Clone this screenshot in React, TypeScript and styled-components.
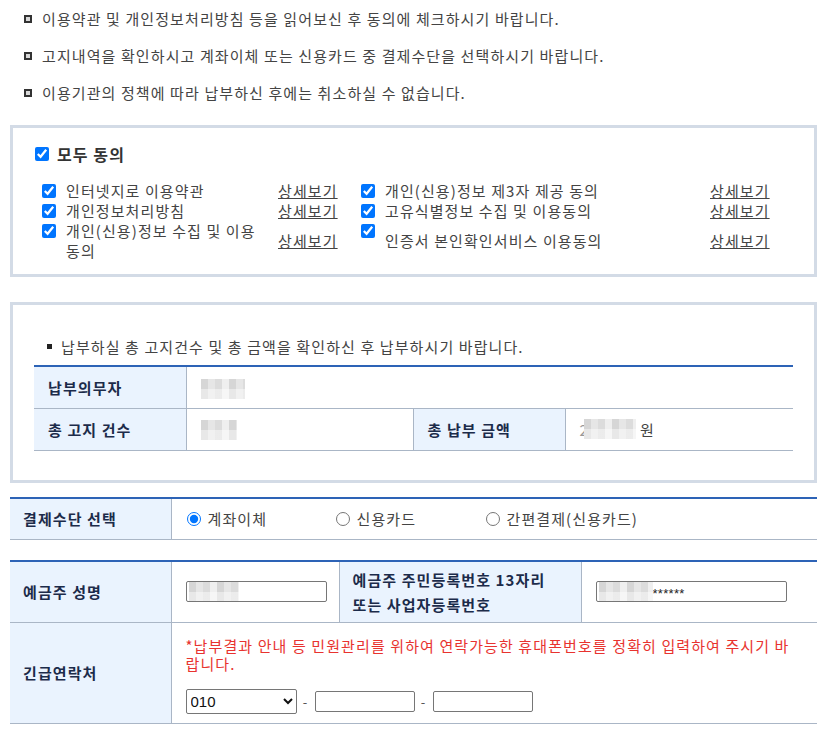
import styled, { createGlobalStyle } from "styled-components";

const GlobalStyle = createGlobalStyle`
  body {
    margin: 0;
    background: #fff;
    font-family: "Noto Sans CJK KR", "Noto Sans", sans-serif;
    font-size: 15px;
    letter-spacing: 1.1px;
    color: #444;
    word-break: keep-all;
  }
  * { box-sizing: border-box; }
`;

const notices = [
  "이용약관 및 개인정보처리방침 등을 읽어보신 후 동의에 체크하시기 바랍니다.",
  "고지내역을 확인하시고 계좌이체 또는 신용카드 중 결제수단을 선택하시기 바랍니다.",
  "이용기관의 정책에 따라 납부하신 후에는 취소하실 수 없습니다.",
];

const leftTerms = ["인터넷지로 이용약관", "개인정보처리방침", "개인(신용)정보 수집 및 이용 동의"];
const rightTerms = ["개인(신용)정보 제3자 제공 동의", "고유식별정보 수집 및 이용동의", "인증서 본인확인서비스 이용동의"];

const Mosaic = ({ width }: { width: number }) => <MaskBlock $width={width} />;

const App = () => {
  return (
    <Page>
      <GlobalStyle />
      <NoticeList>
        {notices.map((n) => (
          <NoticeItem key={n}>
            <SquareBullet />
            {n}
          </NoticeItem>
        ))}
      </NoticeList>

      <AgreeBox>
        <AllAgree>
          <input type="checkbox" defaultChecked />
          모두 동의
        </AllAgree>
        <TermsList>
          {leftTerms.map((t, i) => (
            <TermRow key={t}>
              <CheckCell>
                <input type="checkbox" defaultChecked />
              </CheckCell>
              <TermLabel $width={212}>{t}</TermLabel>
              <DetailLink href="#">상세보기</DetailLink>
              <CheckCell>
                <input type="checkbox" defaultChecked />
              </CheckCell>
              <TermLabel $width={325} $center={i === 2}>
                {rightTerms[i]}
              </TermLabel>
              <DetailLink href="#">상세보기</DetailLink>
            </TermRow>
          ))}
        </TermsList>
      </AgreeBox>

      <InfoBox>
        <InfoNotice>
          <SmallBullet />
          납부하실 총 고지건수 및 총 금액을 확인하신 후 납부하시기 바랍니다.
        </InfoNotice>
        <Table>
          <colgroup>
            <Col $width={152} />
            <Col $width={227} />
            <Col $width={152} />
            <Col />
          </colgroup>
          <tbody>
            <tr>
              <Th>납부의무자</Th>
              <Td colSpan={3}>
                <Mosaic width={44} />
              </Td>
            </tr>
            <tr>
              <Th>총 고지 건수</Th>
              <Td>
                <Mosaic width={36} />
              </Td>
              <Th>총 납부 금액</Th>
              <Td>
                <Amount>
                  <Faint>2</Faint>
                  <Mosaic width={52} />
                  <Won>원</Won>
                </Amount>
              </Td>
            </tr>
          </tbody>
        </Table>
      </InfoBox>

      <PayTable>
        <colgroup>
          <Col $width={161} />
          <Col />
        </colgroup>
        <tbody>
          <tr>
            <Th $tall={42} $padLeft={13}>결제수단 선택</Th>
            <Td>
              <RadioGroup>
                <RadioLabel $width={149}>
                  <input type="radio" name="pay" defaultChecked />
                  계좌이체
                </RadioLabel>
                <RadioLabel $width={150}>
                  <input type="radio" name="pay" />
                  신용카드
                </RadioLabel>
                <RadioLabel>
                  <input type="radio" name="pay" />
                  간편결제(신용카드)
                </RadioLabel>
              </RadioGroup>
            </Td>
          </tr>
        </tbody>
      </PayTable>

      <FormTable>
        <colgroup>
          <Col $width={161} />
          <Col $width={168} />
          <Col $width={242} />
          <Col />
        </colgroup>
        <tbody>
          <tr>
            <Th $tall={61} $padLeft={13}>예금주 성명</Th>
            <Td>
              <TextInput $width={141}>
                <Mosaic width={50} />
              </TextInput>
            </Td>
            <Th $padLeft={13}>
              예금주 주민등록번호 13자리
              <br />
              또는 사업자등록번호
            </Th>
            <Td>
              <TextInput $width={191}>
                <Mosaic width={54} />
                <Stars>******</Stars>
              </TextInput>
            </Td>
          </tr>
          <tr>
            <Th $tall={101} $padLeft={13}>긴급연락처</Th>
            <Td colSpan={3}>
              <Warning>
                *납부결과 안내 등 민원관리를 위하여 연락가능한 휴대폰번호를 정확히 입력하여 주시기 바랍니다.
              </Warning>
              <PhoneRow>
                <PhoneSelect defaultValue="010">
                  <option>010</option>
                  <option>011</option>
                  <option>016</option>
                  <option>017</option>
                  <option>018</option>
                  <option>019</option>
                </PhoneSelect>
                <Dash>-</Dash>
                <PhoneInput />
                <Dash>-</Dash>
                <PhoneInput />
              </PhoneRow>
            </Td>
          </tr>
        </tbody>
      </FormTable>
    </Page>
  );
};

export default App;

const Page = styled.div`
  width: 830px;
  padding: 0 13px 0 10px;
`;

const NoticeList = styled.ul`
  list-style: none;
  margin: 0;
  padding: 0 0 0 14px;
`;

const NoticeItem = styled.li`
  display: flex;
  align-items: center;
  height: 37px;
  color: #444;
`;

const SquareBullet = styled.span`
  width: 8px;
  height: 8px;
  border: 2px solid #333;
  background: #d9d9d9;
  margin-right: 10px;
  flex-shrink: 0;
`;

const AgreeBox = styled.section`
  margin-top: 14px;
  border: 3px solid #d3dbe6;
  padding: 16px 0 0 21px;
  height: 152px;
`;

const AllAgree = styled.label`
  display: flex;
  align-items: center;
  gap: 8px;
  line-height: 20px;
  font-size: 16px;
  font-weight: bold;
  color: #333;
  input {
    margin: 0 0 0 1px;
    width: 14px;
    height: 14px;
  }
`;

const TermsList = styled.div`
  margin-top: 17px;
  padding-left: 7px;
  display: flex;
  flex-direction: column;
`;

const TermRow = styled.div`
  display: flex;
  align-items: stretch;
  line-height: 20px;
  color: #444;
`;

const CheckCell = styled.div`
  width: 25px;
  display: flex;
  align-items: flex-start;
  padding-top: 3px;
  input {
    margin: 0 0 0 1px;
    width: 14px;
    height: 14px;
  }
`;

const TermLabel = styled.div<{ $width: number; $center?: boolean }>`
  width: ${({ $width }) => $width}px;
  display: flex;
  align-items: ${({ $center }) => ($center ? "center" : "flex-start")};
`;

const DetailLink = styled.a`
  width: 82px;
  display: flex;
  align-items: center;
  color: #444;
  text-decoration: underline;
`;

const InfoBox = styled.section`
  margin-top: 25px;
  border: 3px solid #d3dbe6;
  padding: 29px 21px 29px;
`;

const InfoNotice = styled.p`
  margin: 0 0 7px 13px;
  display: flex;
  align-items: center;
  color: #444;
  height: 24px;
`;

const SmallBullet = styled.span`
  width: 5px;
  height: 5px;
  background: #222;
  margin-right: 9px;
`;

const Table = styled.table`
  width: 100%;
  border-collapse: collapse;
  border-top: 2px solid #2d63b6;
  table-layout: fixed;
`;

const PayTable = styled(Table)`
  margin-top: 14px;
`;

const FormTable = styled(Table)`
  margin-top: 20px;
`;

const Col = styled.col<{ $width?: number }>`
  width: ${({ $width }) => ($width ? `${$width}px` : "auto")};
`;

const Th = styled.th<{ $tall?: number; $padLeft?: number }>`
  height: ${({ $tall }) => ($tall ? `${$tall}px` : "42px")};
  background: #eaf3fe;
  color: #1c2b4a;
  font-weight: bold;
  text-align: left;
  padding: 0 0 0 ${({ $padLeft }) => $padLeft ?? 14}px;
  line-height: 25px;
  border-bottom: 1px solid #aab6c6;
  border-right: 1px solid #aab6c6;
`;

const Td = styled.td`
  padding: 0 14px;
  color: #444;
  border-bottom: 1px solid #aab6c6;
  border-right: 1px solid #aab6c6;
  &:last-child {
    border-right: none;
  }
`;

const MaskBlock = styled.span<{ $width: number }>`
  display: inline-block;
  vertical-align: middle;
  width: ${({ $width }) => $width}px;
  height: 20px;
  background:
    linear-gradient(180deg, rgba(255, 255, 255, 0) 50%, rgba(255, 255, 255, 0.45) 50%),
    repeating-linear-gradient(90deg, #d6d6d6 0 7px, #e6e6e6 7px 14px, #dcdcdc 14px 21px, #efefef 21px 28px);
  filter: blur(0.6px);
`;

const Amount = styled.span`
  display: inline-flex;
  align-items: center;
  span:nth-child(2) {
    margin-left: -5px;
  }
`;

const Faint = styled.span`
  color: #999;
`;

const Won = styled.span`
  margin-left: 4px;
`;

const RadioGroup = styled.div`
  display: flex;
  align-items: center;
  padding-left: 1px;
`;

const RadioLabel = styled.label<{ $width?: number }>`
  width: ${({ $width }) => ($width ? `${$width}px` : "auto")};
  display: flex;
  align-items: center;
  gap: 7px;
  color: #444;
  input {
    margin: 0;
    width: 14px;
    height: 14px;
  }
`;

const TextInput = styled.div<{ $width: number }>`
  width: ${({ $width }) => $width}px;
  height: 21px;
  border: 1px solid #767676;
  border-radius: 2px;
  display: flex;
  align-items: center;
  padding-left: 2px;
  color: #222;
  overflow: hidden;
`;

const Stars = styled.span`
  font-family: "Liberation Sans", Arial, sans-serif;
  font-size: 13px;
  letter-spacing: 0.3px;
  padding-top: 3px;
`;

const Warning = styled.p`
  margin: 14px 0 0;
  color: #e8332f;
  line-height: 18px;
  word-break: normal;
`;

const PhoneRow = styled.div`
  display: flex;
  align-items: center;
  margin: 16px 0 9px;
`;

const PhoneSelect = styled.select`
  width: 111px;
  height: 25px;
  border: 1px solid #767676;
  border-radius: 2px;
  font-family: "Liberation Sans", Arial, sans-serif;
  font-size: 15px;
  letter-spacing: 0;
  color: #111;
  background: #fff;
`;

const Dash = styled.span`
  width: 18px;
  text-align: center;
  color: #555;
  font-size: 13px;
`;

const PhoneInput = styled.input`
  width: 100px;
  height: 21px;
  border: 1px solid #767676;
  border-radius: 2px;
  padding: 0;
`;
